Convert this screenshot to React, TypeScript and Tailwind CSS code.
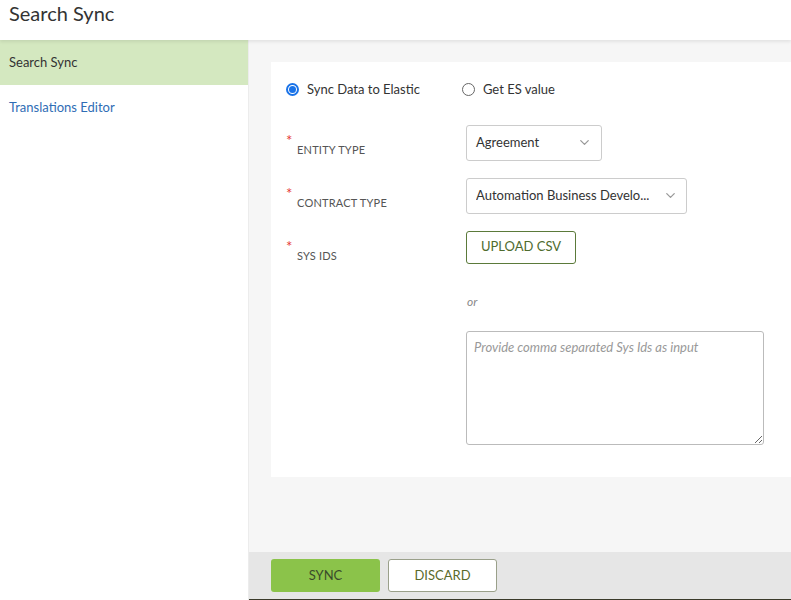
import { ChevronDown } from "lucide-react";

const font = { fontFamily: '"Source Sans Pro", Lato, "Noto Sans", sans-serif' };

const FieldLabel = ({ text }: { text: string }) => (
  <div className="w-[180px] flex items-start pt-[13px]">
    <span className="text-[#e53935] text-[15px] leading-none w-[11px] -mt-[5px]">*</span>
    <span className="text-[11px] text-[#555] uppercase tracking-[0.2px] pt-[4px]">{text}</span>
  </div>
);

export default function App() {
  return (
    <div className="h-[600px] flex flex-col bg-white text-[#333]" style={font}>
      <header className="h-[40px] flex items-center px-[9px] shadow-[0_2px_3px_rgba(0,0,0,0.08)] z-10 relative">
        <h1 className="text-[20px] leading-none -mt-[14px] text-[#333]">Search Sync</h1>
      </header>
      <div className="flex flex-1 min-h-0">
        <aside className="w-[249px] bg-white border-r border-[#ececec]">
          <div className="h-[45px] bg-[#d4e8c0] flex items-center px-[9px] text-[13px] text-[#333]">
            Search Sync
          </div>
          <div className="h-[45px] flex items-center px-[9px] text-[13px] text-[#2f6db5]">
            Translations Editor
          </div>
        </aside>
        <main className="flex-1 flex flex-col bg-[#f6f6f6]">
          <div className="flex-1 pt-[22px] pl-[22px]">
            <div className="bg-white h-[415px] pl-[15px] pt-[18px]">
              <div className="flex items-center gap-[8px] text-[13px] text-[#333]">
                <span className="w-[13px] h-[13px] rounded-full border-[2px] border-[#1a73e8] flex items-center justify-center">
                  <span className="w-[7px] h-[7px] rounded-full bg-[#1a73e8]" />
                </span>
                <span>Sync Data to Elastic</span>
                <span className="ml-[34px] w-[13px] h-[13px] rounded-full border border-[#666]" />
                <span>Get ES value</span>
              </div>
              <div className="mt-[25px] flex">
                <FieldLabel text="Entity Type" />
                <div className="w-[136px] h-[36px] border border-[#ccc] rounded-[3px] flex items-center justify-between px-[9px] text-[13px]">
                  <span>Agreement</span>
                  <ChevronDown className="w-[15px] h-[15px] text-[#999]" strokeWidth={2} />
                </div>
              </div>
              <div className="mt-[17px] flex">
                <FieldLabel text="Contract Type" />
                <div className="w-[221px] h-[36px] border border-[#ccc] rounded-[3px] flex items-center justify-between pl-[9px] pr-[8px] text-[13px]">
                  <span className="truncate">Automation Business Develo...</span>
                  <ChevronDown className="w-[15px] h-[15px] text-[#999] shrink-0 ml-[8px]" strokeWidth={2} />
                </div>
              </div>
              <div className="mt-[17px] flex">
                <FieldLabel text="Sys Ids" />
                <div className="flex flex-col">
                  <button className="w-[110px] h-[33px] border border-[#5b7a3a] rounded-[3px] text-[13px] text-[#4e6b2e] bg-white">
                    UPLOAD CSV
                  </button>
                  <span className="mt-[29px] ml-[1px] text-[12px] italic text-[#888]">or</span>
                  <textarea
                    className="mt-[20px] w-[298px] h-[114px] border border-[#bbb] rounded-[3px] px-[7px] py-[6px] text-[13px] italic placeholder:text-[#999] outline-none"
                    style={font}
                    placeholder="Provide comma separated Sys Ids as input"
                  />
                </div>
              </div>
            </div>
          </div>
          <footer className="h-[48px] bg-[#e6e6e6] flex items-center gap-[8px] pl-[22px] border-b border-[#3a3a2a]">
            <button className="w-[109px] h-[33px] bg-[#8bc34a] rounded-[3px] text-[13px] text-[#3a4a2a]">SYNC</button>
            <button className="w-[109px] h-[33px] bg-white border border-[#9aa08a] rounded-[3px] text-[13px] text-[#5b6a2a]">DISCARD</button>
          </footer>
        </main>
      </div>
    </div>
  );
}
